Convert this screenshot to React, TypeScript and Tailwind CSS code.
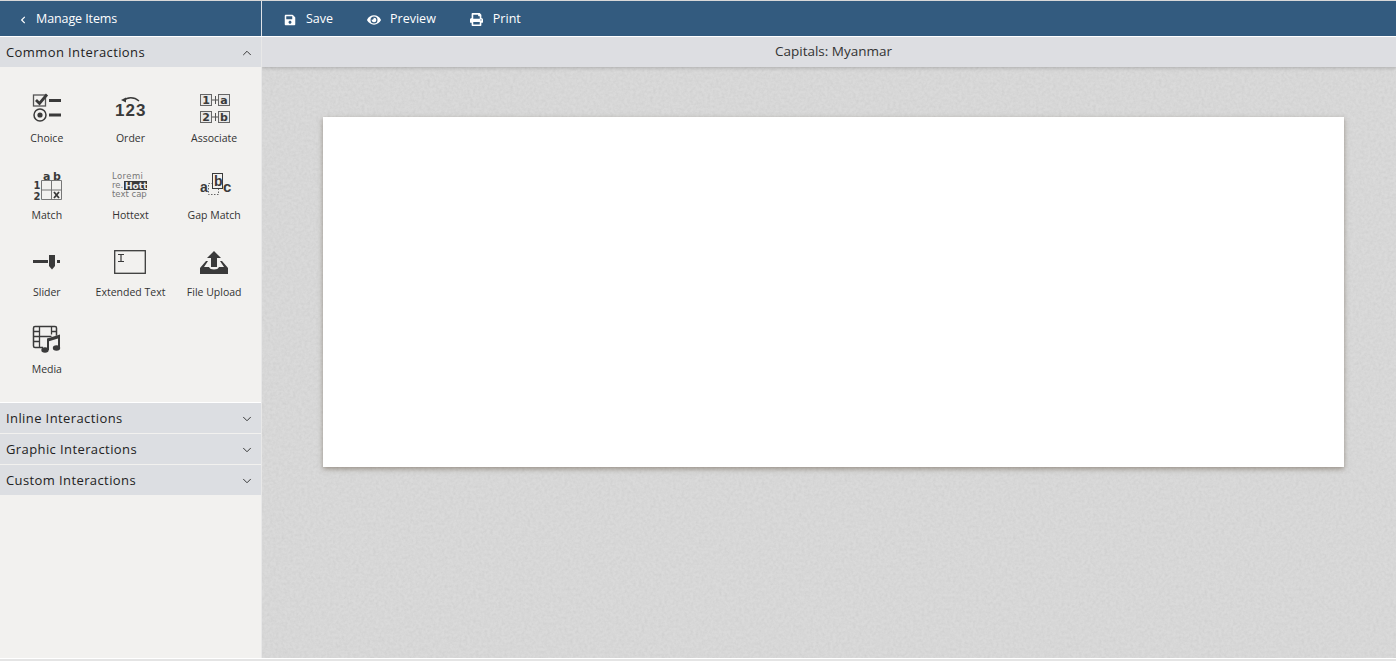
import React from "react";
import { FaSave, FaEye, FaPrint, FaChevronLeft } from "react-icons/fa";
import { LuChevronDown, LuChevronUp } from "react-icons/lu";

const G = "#3a3a3a";
const bold = "font-['DejaVu_Sans'] font-bold fill-[#3a3a3a]";
const narrow = "font-['Liberation_Sans'] font-bold fill-[#3a3a3a]";
const light = "font-['DejaVu_Sans'] fill-[#777777]";

const Choice = () => (
  <svg width="32" height="32" viewBox="0 0 32 32">
    <rect x="2.500" y="3" width="12" height="11" fill="none" stroke="#555" strokeWidth="1.300" />
    <path d="M5 8l3.500 3.500L16 2.500" fill="none" stroke={G} strokeWidth="2.800" />
    <rect x="18" y="7" width="12" height="3" fill={G} />
    <circle cx="9" cy="23" r="6" fill="none" stroke={G} strokeWidth="1.500" />
    <circle cx="9" cy="23" r="2.600" fill={G} />
    <rect x="18" y="21.500" width="12" height="3" fill={G} />
  </svg>
);
const Order = () => (
  <svg width="32" height="32" viewBox="0 0 32 32" className="overflow-visible">
    <path d="M10 8.500c3-3.500 10-4 15 0.500" fill="none" stroke={G} strokeWidth="1.300" />
    <path d="M7 8l5-2.500 0 5z" fill={G} />
    <text x="1" y="24" fontSize="17" letterSpacing="1" className={narrow}>123</text>
  </svg>
);
const Associate = () => (
  <svg width="32" height="32" viewBox="0 0 32 32">
    {([[2, 2, "1"], [20, 2, "a"], [2, 19, "2"], [20, 19, "b"]] as [number, number, string][]).map(([x, y, t]) => (
      <g key={t}>
        <rect x={x + 0.5} y={y + 0.5} width="11" height="11" fill="#e8e8e8" stroke="#666" />
        <text x={x + 6} y={y + 10} fontSize="11" textAnchor="middle" className={bold}>{t}</text>
      </g>
    ))}
    <path d="M14 8h6M17.500 4v8M14 25h6M17.500 21v8" stroke="#555" strokeWidth="1" />
  </svg>
);
const Match = () => (
  <svg width="32" height="32" viewBox="0 0 32 32" className="overflow-visible">
    <text x="12" y="10.500" fontSize="11" className={bold}>a</text>
    <text x="22" y="10.500" fontSize="11" className={bold}>b</text>
    <text x="2.500" y="20" fontSize="10" className={bold}>1</text>
    <text x="2.500" y="31" fontSize="10" className={bold}>2</text>
    <path d="M10.500 11.500h20v19h-20zM20.500 11.500v19M10.500 21h20" fill="none" stroke="#777" />
    <path d="M23 23l5 6M28 23l-5 6" stroke={G} strokeWidth="1.800" />
  </svg>
);
const Hottext = () => (
  <svg width="36" height="32" viewBox="0 0 36 32">
    <text x="0" y="10" fontSize="8.500" letterSpacing=".4" className={light}>Loremi</text>
    <text x="0" y="19" fontSize="8.500" className={light}>re.</text>
    <rect x="12" y="12" width="23" height="9" fill="#3a3a3a" />
    <text x="13" y="20" fontSize="9" className="font-['DejaVu_Sans'] font-bold fill-[#eeeeee]">Hott</text>
    <text x="0" y="28" fontSize="8.500" className={light}>text cap</text>
  </svg>
);
const GapMatch = () => (
  <svg width="32" height="32" viewBox="0 0 32 32" className="overflow-visible">
    <text x="2" y="23" fontSize="14" className={narrow}>a</text>
    <rect x="10.500" y="14.500" width="10" height="11" fill="none" stroke="#666" strokeDasharray="1.500 1.500" />
    <rect x="14.500" y="4.500" width="10" height="15" fill="#f2f1ef" stroke={G} />
    <text x="16" y="17" fontSize="14" className={narrow}>b</text>
    <text x="25" y="23" fontSize="15" className={narrow}>c</text>
  </svg>
);
const Slider = () => (
  <svg width="32" height="32" viewBox="0 0 32 32">
    <rect x="2" y="14" width="15" height="3" fill={G} />
    <path d="M18 9h6v11l-3 3.500-3-3.500z" fill={G} />
    <rect x="26" y="14" width="3" height="3" fill={G} />
  </svg>
);
const Extended = () => (
  <svg width="32" height="32" viewBox="0 0 32 32">
    <rect x="0.700" y="4.700" width="30.600" height="22.600" fill="none" stroke={G} strokeWidth="1.300" />
    <path d="M4 8.500h6M4 15.500h6M7 8.500v7" stroke={G} strokeWidth="1.200" fill="none" />
  </svg>
);
const Upload = () => (
  <svg width="32" height="32" viewBox="0 0 32 32">
    <path d="M16 5l7 7h-4v9h-6v-9H9z" fill={G} />
    <path d="M2 28V22l6-7h2l-4 6h5q1 2.500 5 2.500t5-2.500h5l-4-6h2l6 7v6z" fill={G} />
  </svg>
);
const Media = () => (
  <svg width="32" height="32" viewBox="0 0 32 32">
    <rect x="2.500" y="3.500" width="23" height="21" rx="1.500" fill="none" stroke={G} strokeWidth="1.500" />
    <path d="M8.500 3.500v21M20.500 3.500v8M2.500 8.500h6M2.500 13.500h18M2.500 18.500h6M20.500 8.500h5" stroke={G} strokeWidth="1.300" fill="none" />
    <path d="M14 16l17-5v17H12v-4z" fill="#f2f1ef" />
    <path d="M16 15.500l13-4V25h-2V15.500l-9 2.800V27h-2z" fill={G} />
    <ellipse cx="14" cy="27" rx="3.700" ry="2.800" fill={G} />
    <ellipse cx="25.500" cy="25" rx="3.700" ry="2.800" fill={G} />
  </svg>
);

const items: [string, React.ReactNode][] = [
  ["Choice", <Choice />],
  ["Order", <Order />],
  ["Associate", <Associate />],
  ["Match", <Match />],
  ["Hottext", <Hottext />],
  ["Gap Match", <GapMatch />],
  ["Slider", <Slider />],
  ["Extended Text", <Extended />],
  ["File Upload", <Upload />],
  ["Media", <Media />],
];

function Section({ title, open }: { title: string; open?: boolean }) {
  return (
    <div className="h-[30px] bg-[#dcdee2] flex items-center justify-between pl-[6px] pr-[7px] pt-[2px] text-[13px] tracking-[0.4px] text-[#222]">
      <span>{title}</span>
      {open ? <LuChevronUp size={14} strokeWidth={1.5} /> : <LuChevronDown size={14} strokeWidth={1.5} />}
    </div>
  );
}

function TopButton({ icon, label }: { icon: React.ReactNode; label: string }) {
  return (
    <div className="flex items-center gap-[9px]">
      <span className="w-[14px] flex justify-center">{icon}</span>
      <span>{label}</span>
    </div>
  );
}

export default function App() {
  return (
    <div className="w-[1396px] h-[661px] overflow-hidden flex flex-col bg-white [font-family:'Open_Sans',sans-serif]">
      <div className="h-px bg-[#d8d8d8]" />
      <div className="flex h-[35px] bg-[#335b7f] text-white text-[12.500px]">
        <div className="w-[261px] flex items-center pl-[19px] gap-[9px] pt-[2px] tracking-[-0.1px]">
          <FaChevronLeft size={8} />
          <span>Manage Items</span>
        </div>
        <div className="w-px bg-[#dfe3e8]" />
        <div className="flex-1 flex items-center pl-[21px] gap-[34px] pt-[2px]">
          <TopButton icon={<FaSave size={12} />} label="Save" />
          <TopButton icon={<FaEye size={14} />} label="Preview" />
          <TopButton icon={<FaPrint size={13} />} label="Print" />
        </div>
      </div>
      <div className="h-px bg-white" />
      <div className="flex h-[621px]">
        <div className="w-[261px] bg-[#f2f1ef] flex flex-col">
          <Section title="Common Interactions" open />
          <div className="h-[335px] px-[5px] pt-[19px] grid grid-cols-3 auto-rows-[77px] text-[10.500px] text-[#333]">
            {items.map(([label, icon]) => (
              <div key={label} className="flex flex-col items-center">
                <div className="h-[44px] flex items-center justify-center">{icon}</div>
                <div className="leading-[16px] whitespace-nowrap">{label}</div>
              </div>
            ))}
          </div>
          <div className="flex flex-col gap-px border-t border-white">
            <Section title="Inline Interactions" />
            <Section title="Graphic Interactions" />
            <Section title="Custom Interactions" />
          </div>
        </div>
        <div className="w-px bg-[#e8e8e8]" />
        <div className="relative flex-1 flex flex-col bg-[#dadada] overflow-hidden">
          <svg className="absolute inset-0 w-full h-full" aria-hidden="true">
            <filter id="paper">
              <feTurbulence type="fractalNoise" baseFrequency="0.35" numOctaves="3" seed="4" />
              <feColorMatrix values="0 0 0 0 0.55  0 0 0 0 0.55  0 0 0 0 0.55  0.5 0.5 0 0 -0.36" />
            </filter>
            <rect width="100%" height="100%" filter="url(#paper)" />
          </svg>
          <div className="relative h-[30px] shrink-0 bg-[#dddee2] flex items-center justify-center pl-[9px] pb-[2px] text-[13.500px] text-[#333] shadow-[0_1px_4px_rgba(0,0,0,0.2)]">
            Capitals: Myanmar
          </div>
          <div className="relative ml-[61px] mt-[50px] w-[1021px] h-[350px] bg-white shadow-[0_2px_5px_rgba(100,85,70,0.55)]" />
        </div>
      </div>
      <div className="h-px bg-white" />
      <div className="flex-1 bg-[#e4e4e4]" />
    </div>
  );
}
